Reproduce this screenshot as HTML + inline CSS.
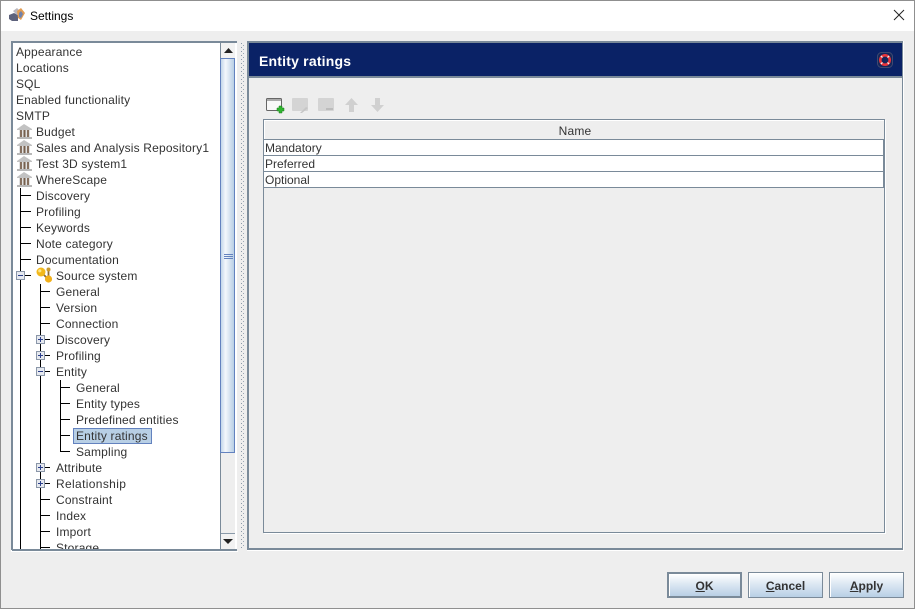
<!DOCTYPE html>
<html><head><meta charset="utf-8"><style>
html,body{margin:0;padding:0;width:915px;height:609px;overflow:hidden;background:#eee;font:12px/16px "Liberation Sans",sans-serif;color:#333}
div,span,svg{position:absolute;display:block}
.t{white-space:nowrap;height:16px;letter-spacing:.17px}
.k{background:#000}
.b{width:7px;height:7px;background:#e6e9ef;border:1px solid #8a96a8}
.b i{position:absolute;left:1px;top:3px;width:5px;height:1px;background:#2b3f8c}
.b u{position:absolute;left:3px;top:1px;width:1px;height:5px;background:#2b3f8c}
.btn{top:572px;height:24px;width:73px;border:1px solid #7a8a99;background:linear-gradient(#fff,#dde8f3 45%,#b8cfe5);text-align:center;font-weight:bold;line-height:26px;box-shadow:inset 1px 1px 0 #fff}
.row{left:264px;width:619px;height:15px;background:#fff;border-bottom:1px solid #7a8a99;border-right:1px solid #7a8a99}
.row span{left:1px;top:0;letter-spacing:0}
</style></head><body>
<div style="left:0;top:0;width:913px;height:607px;border:1px solid #8f8f8f;background:#eee"></div>
<div style="left:1px;top:1px;width:913px;height:30px;background:#fff"></div>
<svg style="left:9px;top:7px" width="17" height="15" viewBox="0 0 17 15"><path d="M0 8l5-2 4 2v6H3l-3-2z" fill="#5d627c"/><path d="M4 4l4-3 2 2-2 5z" fill="#b9b6bd"/><path d="M8 4l4-3 4 5-4 7-3-2z" fill="#e29c52"/><path d="M10 6l2-2 2 3-2 4-2-1z" fill="#6f82ac"/></svg>
<div class="t" style="left:30px;top:8px;color:#000;letter-spacing:0">Settings</div>
<svg style="left:893px;top:9px" width="12" height="12" viewBox="0 0 12 12"><path d="M1 1l10 10M11 1L1 11" stroke="#222" stroke-width="1" fill="none"/></svg>

<!-- tree box -->
<div style="left:11px;top:41px;width:226px;height:510px;background:#fff"></div>
<div style="left:11px;top:41px;width:226px;height:2px;background:#7a8a99"></div>
<div style="left:11px;top:41px;width:2px;height:509px;background:#7a8a99"></div>
<div style="left:12px;top:549px;width:225px;height:2px;background:#7a8a99"></div>
<div style="left:11px;top:551px;width:227px;height:1px;background:#fff"></div>

<!-- tree lines -->
<div class="k" style="left:20px;top:188px;width:1px;height:361px"></div>
<div class="k" style="left:40px;top:284px;width:1px;height:265px"></div>
<div class="k" style="left:60px;top:380px;width:1px;height:72px"></div>
<div class="k" style="left:20px;top:195px;width:11px;height:1px"></div>
<div class="k" style="left:20px;top:211px;width:11px;height:1px"></div>
<div class="k" style="left:20px;top:227px;width:11px;height:1px"></div>
<div class="k" style="left:20px;top:243px;width:11px;height:1px"></div>
<div class="k" style="left:20px;top:259px;width:11px;height:1px"></div>
<div class="k" style="left:20px;top:275px;width:11px;height:1px"></div>
<div class="k" style="left:40px;top:291px;width:10px;height:1px"></div>
<div class="k" style="left:40px;top:307px;width:10px;height:1px"></div>
<div class="k" style="left:40px;top:323px;width:10px;height:1px"></div>
<div class="k" style="left:40px;top:339px;width:10px;height:1px"></div>
<div class="k" style="left:40px;top:355px;width:10px;height:1px"></div>
<div class="k" style="left:40px;top:371px;width:10px;height:1px"></div>
<div class="k" style="left:60px;top:387px;width:10px;height:1px"></div>
<div class="k" style="left:60px;top:403px;width:10px;height:1px"></div>
<div class="k" style="left:60px;top:419px;width:10px;height:1px"></div>
<div class="k" style="left:60px;top:435px;width:10px;height:1px"></div>
<div class="k" style="left:60px;top:451px;width:10px;height:1px"></div>
<div class="k" style="left:40px;top:467px;width:10px;height:1px"></div>
<div class="k" style="left:40px;top:483px;width:10px;height:1px"></div>
<div class="k" style="left:40px;top:499px;width:10px;height:1px"></div>
<div class="k" style="left:40px;top:515px;width:10px;height:1px"></div>
<div class="k" style="left:40px;top:531px;width:10px;height:1px"></div>
<div class="k" style="left:40px;top:547px;width:10px;height:1px"></div>

<div class="b" style="left:16px;top:271px"><i></i></div>
<div class="b" style="left:36px;top:335px"><i></i><u></u></div>
<div class="b" style="left:36px;top:351px"><i></i><u></u></div>
<div class="b" style="left:36px;top:367px"><i></i></div>
<div class="b" style="left:36px;top:463px"><i></i><u></u></div>
<div class="b" style="left:36px;top:479px"><i></i><u></u></div>

<div style="left:73px;top:428px;width:77px;height:14px;background:#b8cfe5;border:1px solid #6382bf"></div>

<!-- clipped tree text -->
<div style="left:13px;top:43px;width:207px;height:506px;overflow:hidden">
<span class="t" style="left:3px;top:1px">Appearance</span>
<span class="t" style="left:3px;top:17px">Locations</span>
<span class="t" style="left:3px;top:33px">SQL</span>
<span class="t" style="left:3px;top:49px">Enabled functionality</span>
<span class="t" style="left:3px;top:65px">SMTP</span>
<span class="t" style="left:23px;top:81px">Budget</span>
<span class="t" style="left:23px;top:97px">Sales and Analysis Repository1</span>
<span class="t" style="left:23px;top:113px">Test 3D system1</span>
<span class="t" style="left:23px;top:129px">WhereScape</span>
<span class="t" style="left:23px;top:145px">Discovery</span>
<span class="t" style="left:23px;top:161px">Profiling</span>
<span class="t" style="left:23px;top:177px">Keywords</span>
<span class="t" style="left:23px;top:193px">Note category</span>
<span class="t" style="left:23px;top:209px">Documentation</span>
<span class="t" style="left:43px;top:225px">Source system</span>
<span class="t" style="left:43px;top:241px">General</span>
<span class="t" style="left:43px;top:257px">Version</span>
<span class="t" style="left:43px;top:273px">Connection</span>
<span class="t" style="left:43px;top:289px">Discovery</span>
<span class="t" style="left:43px;top:305px">Profiling</span>
<span class="t" style="left:43px;top:321px">Entity</span>
<span class="t" style="left:63px;top:337px">General</span>
<span class="t" style="left:63px;top:353px">Entity types</span>
<span class="t" style="left:63px;top:369px">Predefined entities</span>
<span class="t" style="left:63px;top:385px">Entity ratings</span>
<span class="t" style="left:63px;top:401px">Sampling</span>
<span class="t" style="left:43px;top:417px">Attribute</span>
<span class="t" style="left:43px;top:433px;letter-spacing:.35px">Relationship</span>
<span class="t" style="left:43px;top:449px">Constraint</span>
<span class="t" style="left:43px;top:465px">Index</span>
<span class="t" style="left:43px;top:481px">Import</span>
<span class="t" style="left:43px;top:497px">Storage</span>
</div>

<!-- bank icons -->
<svg style="left:16px;top:124px" width="17" height="64" viewBox="0 0 17 64">
<g><path d="M8 0L16 5V6H1V5z" fill="#c2c2c2"/><rect x="1" y="13" width="15" height="2" fill="#b8b8b8"/><rect x="3" y="6" width="11" height="7" fill="#e2e2e2"/><rect x="4" y="6" width="2" height="7" fill="#86705f"/><rect x="7.500" y="6" width="2" height="7" fill="#75604f"/><rect x="11" y="6" width="2" height="7" fill="#86705f"/></g>
<g transform="translate(0,16)"><path d="M8 0L16 5V6H1V5z" fill="#c2c2c2"/><rect x="1" y="13" width="15" height="2" fill="#b8b8b8"/><rect x="3" y="6" width="11" height="7" fill="#e2e2e2"/><rect x="4" y="6" width="2" height="7" fill="#86705f"/><rect x="7.500" y="6" width="2" height="7" fill="#75604f"/><rect x="11" y="6" width="2" height="7" fill="#86705f"/></g>
<g transform="translate(0,32)"><path d="M8 0L16 5V6H1V5z" fill="#c2c2c2"/><rect x="1" y="13" width="15" height="2" fill="#b8b8b8"/><rect x="3" y="6" width="11" height="7" fill="#e2e2e2"/><rect x="4" y="6" width="2" height="7" fill="#86705f"/><rect x="7.500" y="6" width="2" height="7" fill="#75604f"/><rect x="11" y="6" width="2" height="7" fill="#86705f"/></g>
<g transform="translate(0,48)"><path d="M8 0L16 5V6H1V5z" fill="#c2c2c2"/><rect x="1" y="13" width="15" height="2" fill="#b8b8b8"/><rect x="3" y="6" width="11" height="7" fill="#e2e2e2"/><rect x="4" y="6" width="2" height="7" fill="#86705f"/><rect x="7.500" y="6" width="2" height="7" fill="#75604f"/><rect x="11" y="6" width="2" height="7" fill="#86705f"/></g>
</svg>

<!-- source system icon -->
<svg style="left:36px;top:267px" width="17" height="16" viewBox="0 0 17 16"><path d="M5 5L12 12M12.500 3V12" stroke="#8a6a3a" stroke-width="1.800"/><circle cx="5" cy="5" r="4.500" fill="#f2b81c"/><circle cx="3.800" cy="3.800" r="1.600" fill="#fbe58a"/><circle cx="12.500" cy="2.500" r="2" fill="#c89a30"/><circle cx="12.500" cy="12" r="3.600" fill="#f2b01a"/></svg>

<!-- scrollbar -->
<div style="left:220px;top:43px;width:15px;height:506px;background:#eee"></div>
<div style="left:220px;top:43px;width:1px;height:506px;background:#7a8a99"></div>
<div style="left:221px;top:43px;width:14px;height:15px;background:#f2f2f2"></div>
<svg style="left:224px;top:48px" width="9" height="5" viewBox="0 0 9 5"><path d="M4.500 0L9 5H0z" fill="#222"/></svg>
<div style="left:220px;top:58px;width:13px;height:393px;border:1px solid #6382bf;background:linear-gradient(90deg,#c3d6ea,#f4f8fc 35%,#d8e4f1 65%,#b8cfe5)"></div>
<div style="left:224px;top:254px;width:9px;height:1px;background:#6382bf"></div>
<div style="left:224px;top:256px;width:9px;height:1px;background:#6382bf"></div>
<div style="left:224px;top:258px;width:9px;height:1px;background:#6382bf"></div>
<div style="left:221px;top:533px;width:14px;height:15px;background:#f2f2f2;border-top:1px solid #8a9aa9"></div>
<svg style="left:223px;top:539px" width="10" height="5" viewBox="0 0 10 5"><path d="M0 0H10L5 5z" fill="#222"/></svg>

<!-- splitter dots -->
<svg style="left:241px;top:43px" width="4" height="506"><defs><pattern id="d" width="4" height="4" patternUnits="userSpaceOnUse"><rect x="0" y="0" width="1" height="1" fill="#8a98a8"/><rect x="2" y="2" width="1" height="1" fill="#9aa7b5"/></pattern></defs><rect width="4" height="506" fill="url(#d)"/></svg>

<!-- right panel -->
<div style="left:247px;top:41px;width:653px;height:505px;border:1px solid #7a8a99;border-width:2px 1px 2px 2px"></div>
<div style="left:903px;top:41px;width:1px;height:510px;background:#fff"></div>
<div style="left:247px;top:550px;width:657px;height:1px;background:#fff"></div>
<div style="left:249px;top:43px;width:653px;height:33px;background:#0a2266"></div>
<div style="left:249px;top:76px;width:653px;height:2px;background:#7a8a99"></div>
<div class="t" style="left:259px;top:52px;color:#fff;font-weight:bold;font-size:14px;line-height:18px;height:18px;letter-spacing:.2px">Entity ratings</div>
<svg style="left:877px;top:52px" width="16" height="16" viewBox="0 0 16 16"><rect x=".5" y=".5" width="15" height="15" rx="4" fill="#16265a" stroke="#3e4a70"/><circle cx="8" cy="8" r="4.700" fill="none" stroke="#e8343a" stroke-width="2.600"/><path d="M3.900 3.900l1.600 1.600M12.100 3.900l-1.600 1.600M3.900 12.100l1.600-1.600M12.100 12.100l-1.600-1.600" stroke="#f0f0f0" stroke-width="1.300"/></svg>

<!-- toolbar -->
<svg style="left:266px;top:97px" width="126" height="17" viewBox="0 0 126 17">
<rect x=".5" y="1.500" width="15" height="12" rx="1" fill="#f8f8f8" stroke="#666"/><rect x="1" y="2" width="14" height="2" fill="#aaa"/><path d="M11 11h2V9h3v2h2v3h-2v2h-3v-2h-2z" fill="#2fb52f" stroke="#1a7a1a" stroke-width=".5"/>
<rect x="26" y="1" width="16" height="13" rx="1" fill="#d4d4d4"/><path d="M34 16l6-6 2 1-6 5z" fill="#c6c6c6"/>
<rect x="52" y="1" width="16" height="13" rx="1" fill="#d4d4d4"/><rect x="60" y="11" width="7" height="2" fill="#bcbcbc"/>
<path d="M85.500 1L92 8h-4v7h-5V8h-4z" fill="#d0d0d0"/>
<path d="M109 1h5v7h4l-6.500 7L105 8h4z" fill="#d0d0d0"/>
</svg>

<!-- table -->
<div style="left:263px;top:119px;width:622px;height:414px;border:1px solid #7a8a99;box-sizing:border-box;box-shadow:1px 1px 0 #fff"></div>
<div style="left:264px;top:120px;width:620px;height:1px;background:#fff"></div>
<div style="left:264px;top:120px;width:1px;height:19px;background:#fff"></div>
<div style="left:264px;top:139px;width:620px;height:1px;background:#7a8a99"></div>
<div style="left:884px;top:120px;width:1px;height:20px;background:#7a8a99"></div>
<div class="t" style="left:265px;top:123px;width:620px;text-align:center">Name</div>
<div class="row" style="top:140px"><span class="t">Mandatory</span></div>
<div class="row" style="top:156px"><span class="t">Preferred</span></div>
<div class="row" style="top:172px"><span class="t">Optional</span></div>

<!-- buttons -->
<div class="btn" style="left:667px;border-width:2px;width:71px;height:22px;line-height:24px"><u>O</u>K</div>
<div class="btn" style="left:748px"><u>C</u>ancel</div>
<div class="btn" style="left:829px"><u>A</u>pply</div>
</body></html>
